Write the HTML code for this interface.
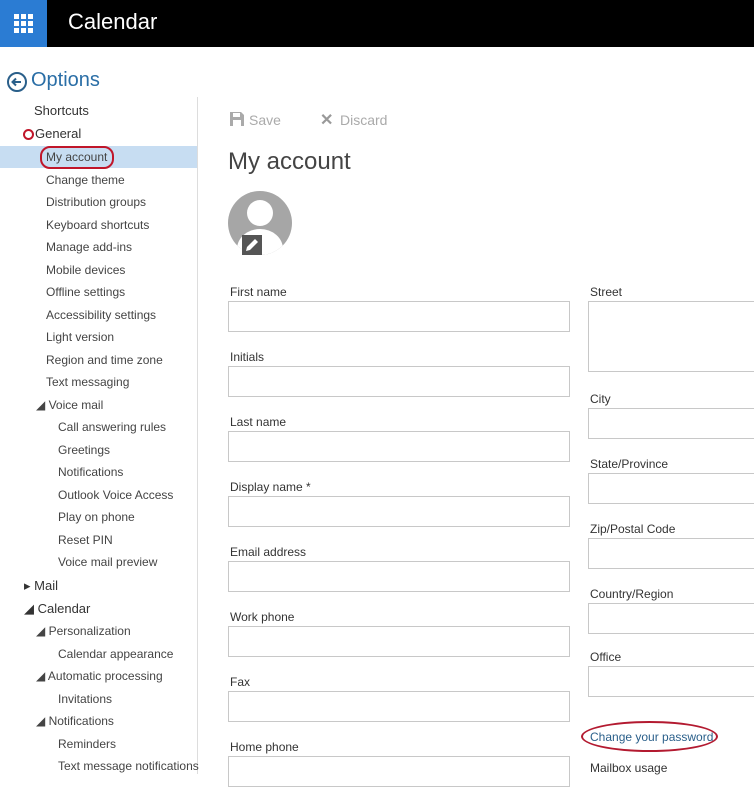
<!DOCTYPE html>
<html><head><meta charset="utf-8"><style>
*{margin:0;padding:0;box-sizing:border-box}
body{width:754px;height:774px;overflow:hidden;background:#fff;font-family:"Liberation Sans",sans-serif;color:#333;position:relative}
.a{position:absolute;white-space:nowrap}
.hdr{left:0;top:0;width:754px;height:47px;background:#000}
.grid{left:0;top:0;width:47px;height:47px;background:#2b7cd3}
.nav{font-size:12px;color:#444}
.lbl{font-size:12px;color:#333}
.in{position:absolute;border:1px solid #c8c8c8;background:#fff;height:31px}
</style></head><body>
<div class="a hdr"></div>
<div class="a grid"><svg width="47" height="47"><g fill="#fff">
<rect x="14" y="14" width="5" height="5"/><rect x="21" y="14" width="5" height="5"/><rect x="28" y="14" width="5" height="5"/>
<rect x="14" y="21" width="5" height="5"/><rect x="21" y="21" width="5" height="5"/><rect x="28" y="21" width="5" height="5"/>
<rect x="14" y="28" width="5" height="5"/><rect x="21" y="28" width="5" height="5"/><rect x="28" y="28" width="5" height="5"/></g></svg></div>
<div class="a" style="left:68px;top:9px;font-size:22px;color:#fff">Calendar</div>

<svg class="a" style="left:6px;top:71px" width="22" height="22"><circle cx="11" cy="11" r="9" fill="none" stroke="#2a5f8a" stroke-width="2"/><path d="M15 11H7M10 7.5L6.5 11L10 14.5" fill="none" stroke="#2a5f8a" stroke-width="2"/></svg>
<div class="a" style="left:31px;top:69px;font-size:20px;color:#2a6ea6">Options</div>

<div class="a" style="left:197px;top:97px;width:1px;height:677px;background:#ddd"></div>
<div class="a" style="left:0;top:146px;width:197px;height:22px;background:#c7ddf2"></div>

<div class="a" style="left:34px;top:103px;font-size:13px;color:#333">Shortcuts</div>
<div class="a" style="left:23px;top:129px;width:11px;height:11px;border-radius:50%;border:2.5px solid #c0162a"></div>
<div class="a" style="left:35px;top:126px;font-size:13px;color:#333">General</div>
<div class="a" style="left:40px;top:146px;width:74px;height:23px;border:2px solid #c0162a;border-radius:10px"></div>

<div class="a nav" style="left:46px;top:150px">My account</div>
<div class="a nav" style="left:46px;top:173px">Change theme</div>
<div class="a nav" style="left:46px;top:195px">Distribution groups</div>
<div class="a nav" style="left:46px;top:218px">Keyboard shortcuts</div>
<div class="a nav" style="left:46px;top:240px">Manage add-ins</div>
<div class="a nav" style="left:46px;top:263px">Mobile devices</div>
<div class="a nav" style="left:46px;top:285px">Offline settings</div>
<div class="a nav" style="left:46px;top:308px">Accessibility settings</div>
<div class="a nav" style="left:46px;top:330px">Light version</div>
<div class="a nav" style="left:46px;top:353px">Region and time zone</div>
<div class="a nav" style="left:46px;top:375px">Text messaging</div>
<div class="a nav" style="left:36px;top:398px">◢ Voice mail</div>
<div class="a nav" style="left:58px;top:420px">Call answering rules</div>
<div class="a nav" style="left:58px;top:443px">Greetings</div>
<div class="a nav" style="left:58px;top:465px">Notifications</div>
<div class="a nav" style="left:58px;top:488px">Outlook Voice Access</div>
<div class="a nav" style="left:58px;top:510px">Play on phone</div>
<div class="a nav" style="left:58px;top:533px">Reset PIN</div>
<div class="a nav" style="left:58px;top:555px">Voice mail preview</div>
<div class="a" style="left:24px;top:578px;font-size:13px;color:#333">▸ Mail</div>
<div class="a" style="left:24px;top:601px;font-size:13px;color:#333">◢ Calendar</div>
<div class="a nav" style="left:36px;top:624px">◢ Personalization</div>
<div class="a nav" style="left:58px;top:647px">Calendar appearance</div>
<div class="a nav" style="left:36px;top:669px">◢ Automatic processing</div>
<div class="a nav" style="left:58px;top:692px">Invitations</div>
<div class="a nav" style="left:36px;top:714px">◢ Notifications</div>
<div class="a nav" style="left:58px;top:737px">Reminders</div>
<div class="a nav" style="left:58px;top:759px">Text message notifications</div>

<svg class="a" style="left:230px;top:112px" width="14" height="14"><path d="M0 0H11L14 3V14H0Z" fill="#aaa"/><rect x="3" y="1" width="7" height="4" fill="#fff"/><rect x="3" y="8" width="8" height="6" fill="#fff"/></svg>
<div class="a" style="left:249px;top:112px;font-size:14px;color:#aaa">Save</div>
<div class="a" style="left:320px;top:110px;font-size:16px;color:#999;font-weight:bold">✕</div>
<div class="a" style="left:340px;top:112px;font-size:14px;color:#aaa">Discard</div>
<div class="a" style="left:228px;top:148px;font-size:24px;color:#444">My account</div>

<div class="a" style="left:228px;top:191px;width:64px;height:64px;border-radius:50%;background:#a6a6a6;overflow:hidden">
<div style="position:absolute;left:19px;top:9px;width:26px;height:26px;border-radius:50%;background:#fff"></div>
<div style="position:absolute;left:9px;top:38px;width:46px;height:40px;border-radius:50%;background:#fff"></div></div>
<div class="a" style="left:242px;top:235px;width:20px;height:20px;background:#555"><svg width="20" height="20"><path d="M4 16L5 12L13 4L16 7L8 15Z" fill="#fff"/></svg></div>

<div class="a lbl" style="left:230px;top:285px">First name</div><div class="in" style="left:228px;top:301px;width:342px"></div>
<div class="a lbl" style="left:230px;top:350px">Initials</div><div class="in" style="left:228px;top:366px;width:342px"></div>
<div class="a lbl" style="left:230px;top:415px">Last name</div><div class="in" style="left:228px;top:431px;width:342px"></div>
<div class="a lbl" style="left:230px;top:480px">Display name *</div><div class="in" style="left:228px;top:496px;width:342px"></div>
<div class="a lbl" style="left:230px;top:545px">Email address</div><div class="in" style="left:228px;top:561px;width:342px"></div>
<div class="a lbl" style="left:230px;top:610px">Work phone</div><div class="in" style="left:228px;top:626px;width:342px"></div>
<div class="a lbl" style="left:230px;top:675px">Fax</div><div class="in" style="left:228px;top:691px;width:342px"></div>
<div class="a lbl" style="left:230px;top:740px">Home phone</div><div class="in" style="left:228px;top:756px;width:342px"></div>

<div class="a lbl" style="left:590px;top:285px">Street</div><div class="in" style="left:588px;top:301px;width:180px;height:71px"></div>
<div class="a lbl" style="left:590px;top:392px">City</div><div class="in" style="left:588px;top:408px;width:180px"></div>
<div class="a lbl" style="left:590px;top:457px">State/Province</div><div class="in" style="left:588px;top:473px;width:180px"></div>
<div class="a lbl" style="left:590px;top:522px">Zip/Postal Code</div><div class="in" style="left:588px;top:538px;width:180px"></div>
<div class="a lbl" style="left:590px;top:587px">Country/Region</div><div class="in" style="left:588px;top:603px;width:180px"></div>
<div class="a lbl" style="left:590px;top:650px">Office</div><div class="in" style="left:588px;top:666px;width:180px"></div>
<div class="a" style="left:590px;top:730px;font-size:12px;color:#2a5f8a">Change your password</div>
<div class="a" style="left:581px;top:721px;width:137px;height:31px;border:2.5px solid #b31a30;border-radius:50%"></div>
<div class="a lbl" style="left:590px;top:761px">Mailbox usage</div>
</body></html>
